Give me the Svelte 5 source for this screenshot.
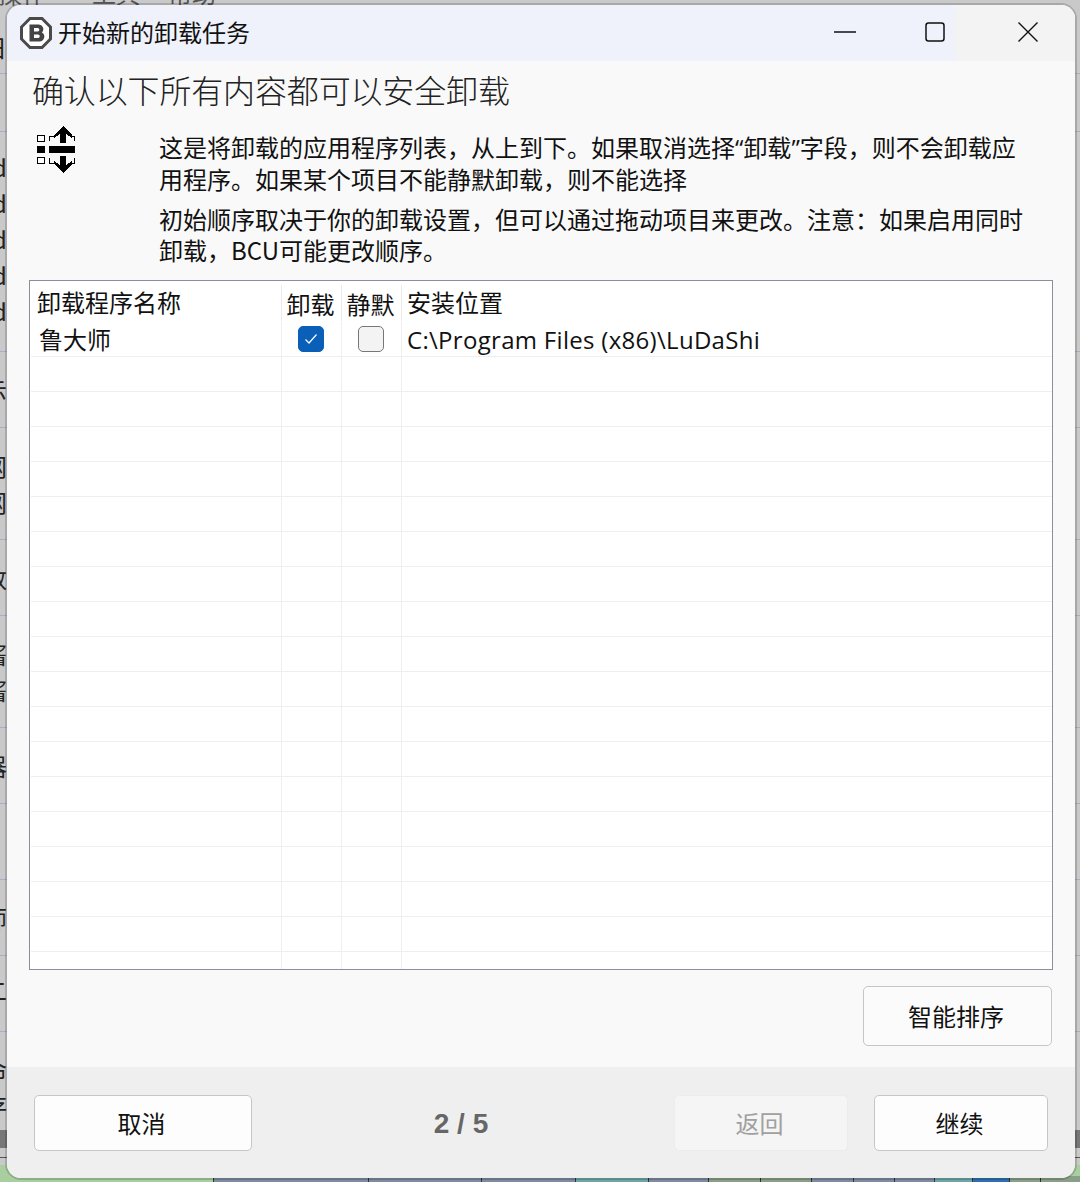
<script>
  const rows = Array.from({ length: 18 }, (_, i) => i);
  const stripLeft = [
    { t: '日', y: 32 },
    { t: 'd', y: 152 }, { t: 'd', y: 188 }, { t: 'd', y: 224 }, { t: 'd', y: 260 }, { t: 'd', y: 296 },
    { t: '示', y: 375 }, { t: '网', y: 451 }, { t: '网', y: 487 }, { t: '数', y: 563 },
    { t: '酱', y: 639 }, { t: '酱', y: 675 }, { t: '器', y: 751 }, { t: '师', y: 903 },
    { t: '二', y: 975 }, { t: '命', y: 1055 }, { t: '存', y: 1090 }
  ];
  const stripLines = [73, 131, 351, 427, 539, 615, 727, 803, 879, 955, 1031];
  const tiles = [
    { x: 213, w: 155, c: '#7f8ba0' }, { x: 368, w: 113, c: '#7f8ba0' }, { x: 481, w: 94, c: '#7f8ba0' },
    { x: 575, w: 73, c: '#6fa5a5' }, { x: 648, w: 60, c: '#7f8ba0' }, { x: 708, w: 52, c: '#8a9f88' },
    { x: 760, w: 51, c: '#8a9f88' }, { x: 811, w: 42, c: '#7f8ba0' }, { x: 853, w: 41, c: '#7f8ba0' },
    { x: 894, w: 40, c: '#7f8ba0' }, { x: 934, w: 38, c: '#6fa5a5' }, { x: 972, w: 37, c: '#2f6fb0' },
    { x: 1009, w: 31, c: '#8a9f88' }, { x: 1040, w: 40, c: '#8a9f88' }
  ];
</script>

<div class="desktop">
  <div class="behind" aria-hidden="true">
    <span class="menu m1">操作</span><span class="menu m2">工具</span><span class="menu m3">帮助</span>
    {#each stripLeft as s}
      <span class="clip" style="top:{s.y}px">{s.t}</span>
    {/each}
    {#each stripLines as y}
      <i class="hline" style="top:{y}px"></i>
    {/each}
    <i class="scroll"></i>
    <i class="rule"></i>
    <i class="ground"></i>
    {#each tiles as t}
      <i class="tile" style="left:{t.x}px;width:{t.w}px;background:{t.c}"></i>
    {/each}
  </div>

  <div class="window">
    <header class="titlebar">
      <svg class="logo" width="32" height="32" viewBox="0 0 32 32">
        <path d="M10 1.500h12l8.500 8.500v12l-8.500 8.500h-12l-8.500-8.500v-12z" fill="#fff" stroke="#4a4a4a" stroke-width="3"/>
        <path d="M9.500 7.500h9a4.600 4.600 0 0 1 3.400 7.900a4.900 4.900 0 0 1-2.900 9.100h-9.500zM14 11v3.500h3.600a1.750 1.750 0 0 0 0-3.500zM14 17.500v3.500h4a1.750 1.750 0 0 0 0-3.500z" fill="#444" fill-rule="evenodd"/>
      </svg>
      <span class="title">开始新的卸载任务</span>
      <div class="caption">
        <button class="cap min" aria-label="最小化"><svg width="22" height="22" viewBox="0 0 22 22"><path d="M0 11h22" stroke="#111" stroke-width="1.500"/></svg></button>
        <button class="cap max" aria-label="最大化"><svg width="20" height="20" viewBox="0 0 20 20"><rect x="1" y="1" width="18" height="18" rx="2.500" fill="none" stroke="#111" stroke-width="1.500"/></svg></button>
        <button class="cap close" aria-label="关闭"><svg width="20" height="20" viewBox="0 0 20 20"><path d="M.5.500l19 19M19.500.500l-19 19" stroke="#111" stroke-width="1.400"/></svg></button>
      </div>
    </header>

    <main class="content">
      <h1>确认以下所有内容都可以安全卸载</h1>
      <section class="intro">
        <svg class="reorder" width="40" height="48" viewBox="0 0 40 48" shape-rendering="crispEdges">
          <g fill="#fff" stroke="#000" stroke-width="1">
            <rect x=".5" y="9.500" width="7" height="6"/>
            <rect x=".5" y="31.500" width="7" height="6"/>
          </g>
          <rect y="20" width="8" height="7"/>
          <rect x="12" y="20" width="26" height="7"/>
          <path d="M12.500 15v-5h4M37.500 15v-5h-4M12.500 32v5h4M37.500 32v5h-4" fill="none" stroke="#000"/>
          <path d="M26 0l9 9v3l-6-4v9h-6v-9l-6 4v-3z"/>
          <path d="M26 47l9-9v-3l-6 4v-9h-6v9l-6-4v3z"/>
        </svg>
        <div class="copy">
          <p>这是将卸载的应用程序列表，从上到下。如果取消选择<span class="q">“</span>卸载<span class="q">”</span>字段，则不会卸载应用程序。如果某个项目不能静默卸载，则不能选择</p>
          <p>初始顺序取决于你的卸载设置，但可以通过拖动项目来更改。注意：如果启用同时卸载，BCU可能更改顺序。</p>
        </div>
      </section>

      <div class="table">
        <div class="row head">
          <div class="c name">卸载程序名称</div>
          <div class="c chk">卸载</div>
          <div class="c chk">静默</div>
          <div class="c path">安装位置</div>
        </div>
        <div class="row body">
          <div class="c name first">鲁大师</div>
          <div class="c chk">
            <span class="box on"><svg width="14" height="12" viewBox="0 0 14 12"><path d="M1.500 6.500l3.500 3.500l7.500-8.500" fill="none" stroke="#fff" stroke-width="1.200"/></svg></span>
          </div>
          <div class="c chk"><span class="box"></span></div>
          <div class="c path">C:\Program Files (x86)\LuDaShi</div>
        </div>
        {#each rows as r (r)}
          <div class="row body empty">
            <div class="c name"></div><div class="c chk"></div><div class="c chk"></div><div class="c path"></div>
          </div>
        {/each}
      </div>

      <div class="tools">
        <button class="btn sort">智能排序</button>
      </div>
    </main>

    <footer class="footer">
      <button class="btn cancel">取消</button>
      <span class="steps">2 / 5</span>
      <button class="btn nav disabled" disabled>返回</button>
      <button class="btn nav next">继续</button>
    </footer>
  </div>
</div>

<style>
  :global(body) {
    margin: 0;
    background: #c9c9c9;
  }
  .desktop {
    position: relative;
    width: 1080px;
    height: 1182px;
    overflow: hidden;
    box-sizing: border-box;
    padding: 5px 5px 4px 7px;
    font-family: "Noto Sans CJK SC", "Open Sans", sans-serif;
    color: #111;
  }
  .behind {
    position: absolute;
    inset: 0;
    overflow: hidden;
    font-size: 24px;
    line-height: 30px;
    color: #222;
  }
  .menu { position: absolute; top: -22px; color: #555; }
  .m1 { left: -2px; }
  .m2 { left: 92px; }
  .m3 { left: 168px; }
  .clip { position: absolute; left: -17px; width: 24px; text-align: right; }
  .hline { position: absolute; left: 0; right: 0; height: 1px; background: #a9adc6; }
  .scroll { position: absolute; left: 0; right: 0; top: 1130px; height: 18px; background: #777; }
  .rule { position: absolute; left: 0; right: 0; top: 1157px; height: 1px; background: #555; }
  .ground { position: absolute; left: 0; right: 0; top: 1165px; bottom: 0; background: #a9cfa0; }
  .tile { position: absolute; top: 1176px; height: 6px; border-left: 1px solid #333; box-sizing: border-box; }

  .window {
    position: relative;
    height: 100%;
    display: flex;
    flex-direction: column;
    border-radius: 14px;
    overflow: hidden;
    background: #f9f9f9;
    box-shadow: 0 0 0 2px rgba(0, 0, 0, 0.16);
  }

  .titlebar {
    flex: 0 0 56px;
    box-sizing: border-box;
    display: flex;
    align-items: center;
    padding-left: 13px;
    background: #f0f2fb;
  }
  .logo { flex: none; margin: -1px 6px 0 0; }
  .title { font-size: 24px; line-height: 32px; flex: 1; margin-top: -3px; }
  .caption { display: flex; align-self: stretch; }
  .cap {
    border: 0;
    padding: 0 0 2px 50px;
    background: none;
    display: flex;
    align-items: center;
    justify-content: center;
    box-sizing: border-box;
  }
  .min { width: 90px; }
  .max { width: 90px; }
  .close { width: 120px; background: #f3f3f3; padding-left: 26px; }

  .content {
    flex: 1;
    display: flex;
    flex-direction: column;
    padding: 0 22px;
    min-height: 0;
  }
  h1 {
    flex: none;
    margin: 6px 0 0 3px;
    font-size: 32px;
    line-height: 44px;
    font-weight: 300;
    color: #222;
    letter-spacing: -0.15px;
  }
  .intro {
    flex: none;
    display: flex;
    margin-top: 15px;
    height: 154px;
  }
  .reorder { flex: none; margin: 0 0 0 8px; }
  .copy { margin-left: 82px; width: 880px; margin-top: 6px; }
  .copy p {
    margin: 0 0 10px;
    font-size: 24px;
    line-height: 30.6px;
  }
  .q { font-family: "Open Sans", sans-serif; }

  .table {
    flex: none;
    height: 690px;
    box-sizing: border-box;
    border: 1px solid #8c8f99;
    background: #fff;
    overflow: hidden;
    padding-left: 1px;
  }
  .row { display: flex; }
  .head { height: 41px; padding-top: 4px; box-sizing: border-box; font-size: 24px; }
  .head .c { height: 36px; line-height: 33px; border-right: 1px solid #eaeaea; }
  .head .name { padding-left: 6px; }
  .head .chk { padding-right: 2px; }
  .head .path { padding-left: 5px; border-right: 0; }
  .body { height: 35px; box-sizing: border-box; border-bottom: 1px solid #efefef; font-size: 24px; }
  .c { box-sizing: border-box; border-right: 1px solid #efefef; }
  .name { width: 251px; }
  .chk { width: 60px; display: flex; align-items: center; justify-content: center; }
  .path { flex: 1; border-right: 0; padding-left: 5px; white-space: nowrap; }
  .first { padding-left: 8px; line-height: 34px; }
  .body .path { font-family: "Open Sans", "Noto Sans CJK SC", sans-serif; line-height: 35px; letter-spacing: 0.3px; }

  .box {
    width: 26px;
    height: 26px;
    box-sizing: border-box;
    margin: 0 2px 0 0;
    border-radius: 5px;
    border: 1px solid #777;
    background: #f3f3f3;
    display: flex;
    align-items: center;
    justify-content: center;
  }
  .on { background: #0a5fb8; border-color: #0a5fb8; }

  .tools {
    flex: none;
    display: flex;
    justify-content: flex-end;
    padding: 16px 1px 0 0;
  }
  .btn {
    font: inherit;
    font-size: 24px;
    color: #111;
    background: #fdfdfd;
    border: 1px solid #c6c6c6;
    border-radius: 5px;
    padding: 0 3px 2px 0;
  }
  .sort { width: 189px; height: 60px; background: #fbfbfb; }

  .footer {
    flex: 0 0 111px;
    box-sizing: border-box;
    display: flex;
    align-items: flex-start;
    padding: 28px 0 0 27px;
    background: #efefef;
  }
  .cancel { width: 218px; height: 56px; }
  .steps {
    box-sizing: border-box;
    width: 422px;
    padding-right: 4px;
    text-align: center;
    font-family: "Liberation Sans", Arial, sans-serif;
    font-size: 28px;
    line-height: 58px;
    font-weight: 700;
    color: #666;
  }
  .nav { width: 174px; height: 56px; }
  .disabled { background: #f5f5f5; border-color: #ececec; color: #a0a0a0; margin-right: 26px; }
</style>
